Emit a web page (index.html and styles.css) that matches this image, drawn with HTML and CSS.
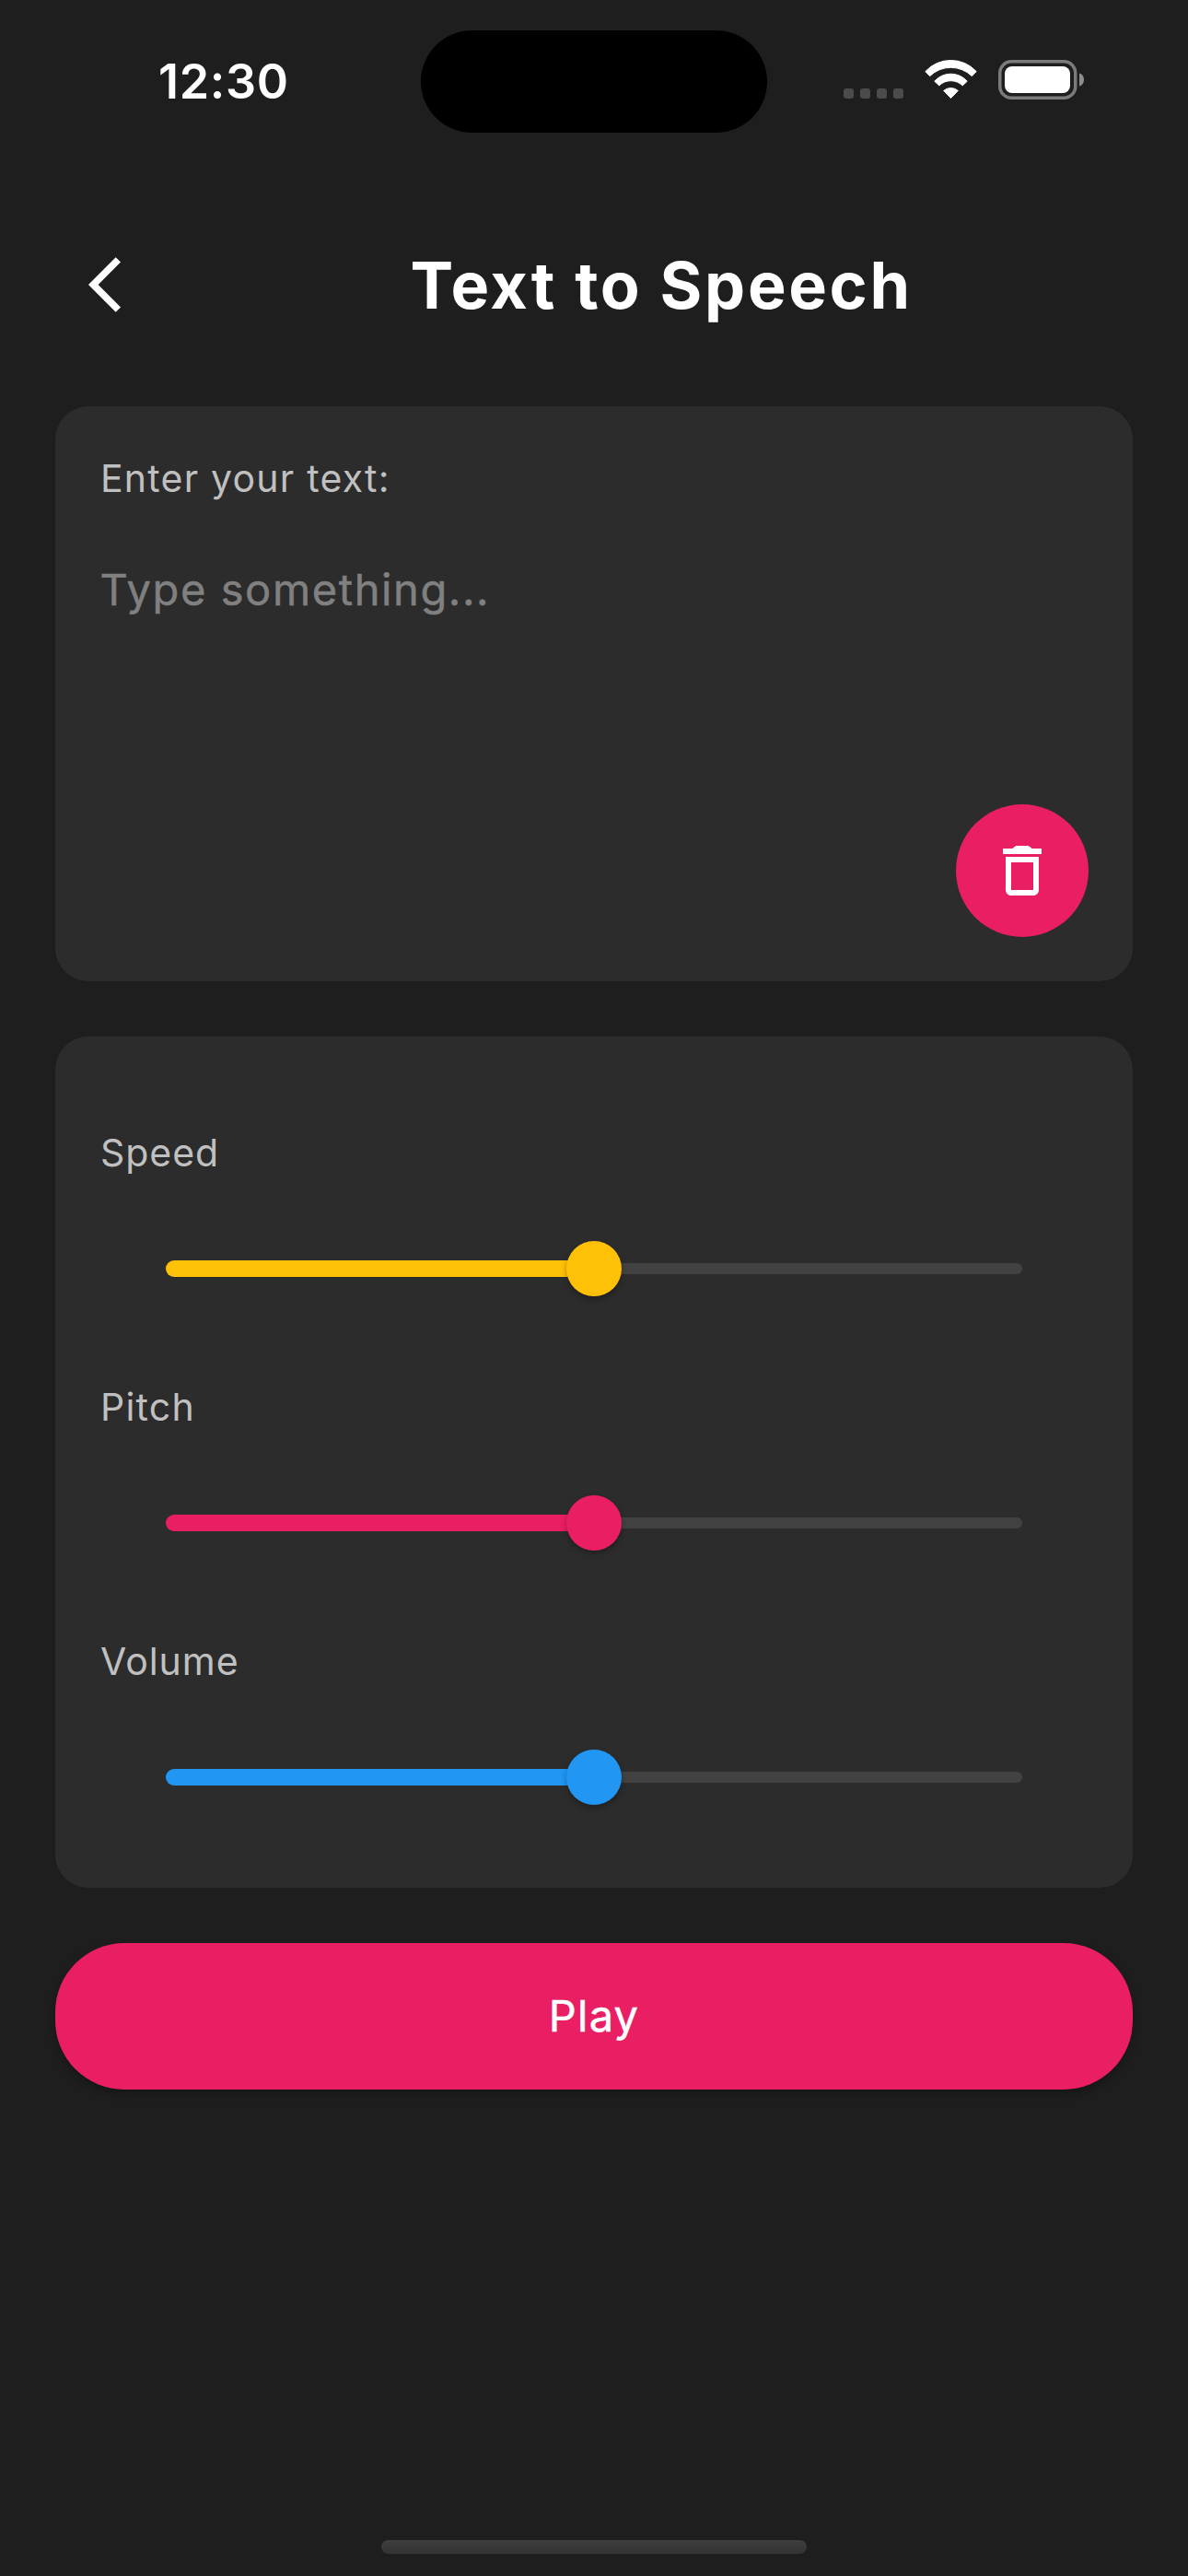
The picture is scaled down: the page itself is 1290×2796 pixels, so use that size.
FILE: index.html
```html
<!DOCTYPE html>
<html lang="en">
<head>
<meta charset="utf-8">
<title>Text to Speech</title>
<link rel="stylesheet" href="styles.css">
</head>
<body>
<div class="screen">
  <div class="status-bar">
    <div class="time">12:30</div>
    <div class="island"></div>
    <div class="indicators">
      <div class="signal"><i></i><i></i><i></i><i></i></div>
      <svg class="wifi" viewBox="0 0 57 43" width="57" height="43" fill="#fff" stroke="#fff" stroke-width="1" stroke-linejoin="round">
        <path d="M.8 12.6A37.6 37.6 0 0 1 56.2 12.6L51.3 17.6A32.6 32.6 0 0 0 5.7 17.6Z"/>
        <path d="M10.8 23.2A23.5 23.5 0 0 1 46.2 23.2L41.2 27.9A18.1 18.1 0 0 0 15.8 27.9Z"/>
        <path d="M20.7 33.4A12 12 0 0 1 36.3 33.4L28.5 41.5Z"/>
      </svg>
      <svg class="battery" viewBox="0 0 94 44" width="94" height="44">
        <rect x="1.75" y="1.75" width="82" height="39.5" rx="12.5" fill="none" stroke="#7b7b7b" stroke-width="3.5"/>
        <rect x="7" y="7" width="71" height="29" rx="8" fill="#fff"/>
        <path d="M88 14.5C91.5 15.5 93 18.500 93 21.500S91.500 27.500 88 28.500Z" fill="#8e8e8e"/>
      </svg>
    </div>
  </div>

  <header class="app-bar">
    <svg class="back" viewBox="0 0 12 24" width="36" height="72"><path fill="#fff" d="M11.67 3.87 9.9 2.1 0 12l9.9 9.9 1.77-1.77L3.54 12z"/></svg>
    <h1 class="title">Text to Speech</h1>
  </header>

  <main class="content">
    <section class="card text-card">
      <div class="label">Enter your text:</div>
      <div class="placeholder">Type something...</div>
      <div class="clear-button">
        <svg viewBox="0 0 24 24" width="72" height="72"><path fill="#fff" d="M6 19c0 1.1.9 2 2 2h8c1.100 0 2-.9 2-2V7H6v12zM8 9h8v10H8V9zm7.500-5-.44-.44c-.36-.36-.87-.56-1.360-.56h-3.400c-.5 0-1 .2-1.360.56L8.500 4H5v2h14V4z"/></svg>
      </div>
    </section>

    <section class="card sliders-card">
      <div class="control speed">
        <div class="label">Speed</div>
        <div class="slider"><div class="fill"></div><div class="thumb"></div><div class="rest"></div></div>
      </div>
      <div class="control pitch">
        <div class="label">Pitch</div>
        <div class="slider"><div class="fill"></div><div class="thumb"></div><div class="rest"></div></div>
      </div>
      <div class="control volume">
        <div class="label">Volume</div>
        <div class="slider"><div class="fill"></div><div class="thumb"></div><div class="rest"></div></div>
      </div>
    </section>

    <div class="play-button">Play</div>
  </main>

  <div class="home-indicator"></div>
</div>
</body>
</html>
```
FILE: styles.css
```css
* { box-sizing: border-box; }

body {
  margin: 0;
  background: #1e1e1e;
  color: #fff;
  font-family: Inter, "Liberation Sans", sans-serif;
}

.screen {
  display: flex;
  flex-direction: column;
  width: 1290px;
  height: 2796px;
  padding-bottom: 24px;
}

/* Status bar */
.status-bar {
  display: grid;
  grid-template-columns: 457px 376px 1fr;
  height: 177px;
  padding-top: 33px;
}

.time {
  margin-top: 30px;
  padding-left: 172px;
  font-size: 52px;
  font-weight: 600;
  line-height: 52px;
  letter-spacing: 0.7px;
}

.island {
  height: 111px;
  border-radius: 56px;
  background: #000;
}

.indicators {
  display: flex;
  align-items: flex-start;
  padding: 32px 0 0 83px;
}

.signal {
  display: flex;
  gap: 7px;
  margin: 31px 23px 0 0;
}

.signal i {
  width: 11px;
  height: 11px;
  border-radius: 3px;
  background: #4b4b4b;
}

.battery { margin-left: 23px; }

/* Title row */
.app-bar {
  display: flex;
  align-items: center;
  height: 264px;
  padding: 0 0 0 96px;
}

.title {
  margin: 2px 0 0 313.5px;
  font-size: 70px;
  font-weight: 700;
  line-height: 84px;
  letter-spacing: 2.66px;
}

/* Content */
.content {
  display: flex;
  flex-direction: column;
  gap: 60px;
  padding: 0 60px;
}

.card {
  display: flex;
  flex-direction: column;
  border-radius: 36px;
  background: #2c2c2c;
}

.label {
  padding-left: 1px;
  color: #c0c0c0;
  font-size: 41px;
  line-height: 50px;
  letter-spacing: 1.22px;
}

.text-card {
  height: 624px;
  padding: 53px 48px 48px;
}

.placeholder {
  margin-top: 67px;
  padding-left: 0.5px;
  color: #808080;
  font-size: 47px;
  line-height: 58px;
  letter-spacing: 1.6px;
  -webkit-text-stroke: 0.5px #808080;
}

.clear-button {
  display: flex;
  align-items: center;
  justify-content: center;
  align-self: flex-end;
  width: 144px;
  height: 144px;
  margin-top: auto;
  border-radius: 50%;
  background: #e91e63;
}

.sliders-card {
  height: 924px;
  padding: 101px 48px 0;
}

.control {
  flex: none;
  height: 276px;
}

.speed { --accent: #ffc107; }
.pitch { --accent: #e91e63; }
.volume { --accent: #2196f3; }

.speed .label,
.volume .label { letter-spacing: 0.95px; }

.slider {
  display: flex;
  align-items: center;
  height: 60px;
  margin-top: 71px;
  padding: 0 72px;
}

.fill {
  flex: 1;
  height: 18px;
  margin-right: -30px;
  border-radius: 9px 0 0 9px;
  background: var(--accent);
}

.thumb {
  z-index: 1;
  width: 60px;
  height: 60px;
  border-radius: 50%;
  background: var(--accent);
  box-shadow: 0 3px 6px rgba(0, 0, 0, 0.3);
}

.rest {
  flex: 1;
  height: 12px;
  margin-left: -30px;
  border-radius: 0 6px 6px 0;
  background: #424242;
}

.play-button {
  height: 159px;
  border-radius: 75px;
  background: #e91e63;
  box-shadow: 0 4px 8px rgba(0, 0, 0, 0.3);
  font-size: 47px;
  line-height: 157px;
  letter-spacing: 1.2px;
  text-align: center;
  -webkit-text-stroke: 0.5px #fff;
}

.home-indicator {
  align-self: center;
  width: 462px;
  height: 15px;
  margin-top: auto;
  border-radius: 8px;
  background: linear-gradient(#3e3e3e, #333);
}
```
